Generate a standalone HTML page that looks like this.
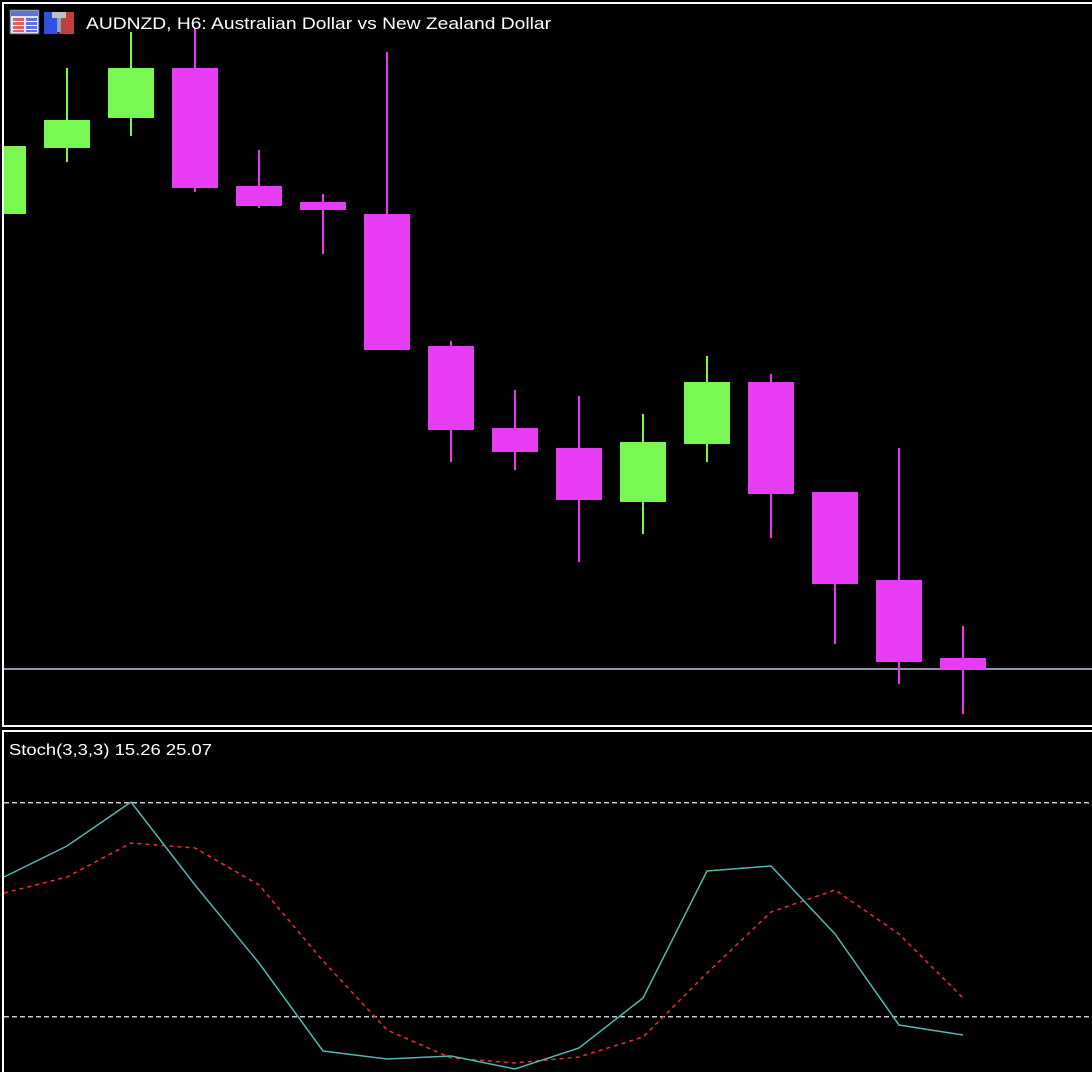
<!DOCTYPE html>
<html><head><meta charset="utf-8"><style>
html,body{margin:0;padding:0;background:#000;width:1092px;height:1072px;overflow:hidden}
svg{display:block}
text{font-family:"Liberation Sans","DejaVu Sans",sans-serif;fill:#fff}
</style></head><body>
<svg width="1092" height="1072" viewBox="0 0 1092 1072" xmlns="http://www.w3.org/2000/svg" shape-rendering="crispEdges">
<rect width="1092" height="1072" fill="#000"/>
<rect x="2" y="2" width="2" height="725" fill="#fff"/>
<rect x="2" y="2" width="1090" height="2" fill="#fff"/>
<rect x="2" y="725" width="1090" height="2" fill="#fff"/>
<rect x="2" y="730" width="2" height="342" fill="#fff"/>
<rect x="2" y="730" width="1090" height="2" fill="#fff"/>
<rect x="4" y="668" width="1088" height="2" fill="#8a96a4"/>
<g>
<rect x="4" y="146" width="22" height="68" fill="#78f850"/>
<rect x="66" y="68" width="2" height="94" fill="#78f850"/><rect x="44" y="120" width="46" height="28" fill="#78f850"/>
<rect x="130" y="32" width="2" height="104" fill="#78f850"/><rect x="108" y="68" width="46" height="50" fill="#78f850"/>
<rect x="194" y="28" width="2" height="164" fill="#e83cf4"/><rect x="172" y="68" width="46" height="120" fill="#e83cf4"/>
<rect x="258" y="150" width="2" height="58" fill="#e83cf4"/><rect x="236" y="186" width="46" height="20" fill="#e83cf4"/>
<rect x="322" y="194" width="2" height="60" fill="#e83cf4"/><rect x="300" y="202" width="46" height="8" fill="#e83cf4"/>
<rect x="386" y="52" width="2" height="298" fill="#e83cf4"/><rect x="364" y="214" width="46" height="136" fill="#e83cf4"/>
<rect x="450" y="341" width="2" height="121" fill="#e83cf4"/><rect x="428" y="346" width="46" height="84" fill="#e83cf4"/>
<rect x="514" y="390" width="2" height="80" fill="#e83cf4"/><rect x="492" y="428" width="46" height="24" fill="#e83cf4"/>
<rect x="578" y="396" width="2" height="166" fill="#e83cf4"/><rect x="556" y="448" width="46" height="52" fill="#e83cf4"/>
<rect x="642" y="414" width="2" height="120" fill="#78f850"/><rect x="620" y="442" width="46" height="60" fill="#78f850"/>
<rect x="706" y="356" width="2" height="106" fill="#78f850"/><rect x="684" y="382" width="46" height="62" fill="#78f850"/>
<rect x="770" y="374" width="2" height="164" fill="#e83cf4"/><rect x="748" y="382" width="46" height="112" fill="#e83cf4"/>
<rect x="834" y="492" width="2" height="152" fill="#e83cf4"/><rect x="812" y="492" width="46" height="92" fill="#e83cf4"/>
<rect x="898" y="448" width="2" height="236" fill="#e83cf4"/><rect x="876" y="580" width="46" height="82" fill="#e83cf4"/>
<rect x="962" y="626" width="2" height="88" fill="#e83cf4"/><rect x="940" y="658" width="46" height="12" fill="#e83cf4"/>
</g>
<g>
<rect x="10" y="10" width="29" height="24" fill="#e0e4f0" stroke="#404860" stroke-width="1"/>
<rect x="11" y="11" width="27" height="5" fill="#6070e0"/>
<rect x="13" y="18" width="11" height="14" fill="#e06060"/>
<rect x="26" y="18" width="11" height="14" fill="#6070e0"/>
<rect x="13" y="21" width="24" height="1" fill="#fff"/><rect x="13" y="25" width="24" height="1" fill="#fff"/><rect x="13" y="29" width="24" height="1" fill="#fff"/>
<rect x="44" y="12" width="14" height="22" fill="#3050e0"/>
<rect x="59" y="12" width="15" height="22" fill="#c04040"/>
<rect x="52" y="12" width="14" height="6" fill="#c0c0c0"/>
<rect x="57" y="18" width="4" height="14" fill="#a0a0a0"/>
</g>
<text x="86" y="29" font-size="17" textLength="465" lengthAdjust="spacingAndGlyphs">AUDNZD, H6:  Australian Dollar vs New Zealand Dollar</text>
<text x="9" y="755" font-size="16" textLength="203" lengthAdjust="spacingAndGlyphs">Stoch(3,3,3) 15.26 25.07</text>
<line x1="4" y1="802.5" x2="1092" y2="802.5" stroke="#c8c8c8" stroke-width="1.5" stroke-dasharray="5,3"/>
<line x1="4" y1="1016.5" x2="1092" y2="1016.5" stroke="#c8c8c8" stroke-width="1.5" stroke-dasharray="5,3"/>
<g shape-rendering="auto" fill="none">
<polyline stroke="#e8302c" stroke-width="1.5" stroke-dasharray="4,4" points="4,893 67,877 131,843 195,848 259,885 323,961 387,1030 451,1058 515,1063 579,1057 643,1037 707,973 771,912 835,890 899,934 963,998"/>
<polyline stroke="#50b8b0" stroke-width="1.5" points="4,877 67,846 131,802 195,885 259,963 323,1051 387,1059 451,1056 515,1069 579,1048 643,998 707,871 771,866 835,934 899,1025 963,1035"/>
</g>
</svg>
</body></html>
